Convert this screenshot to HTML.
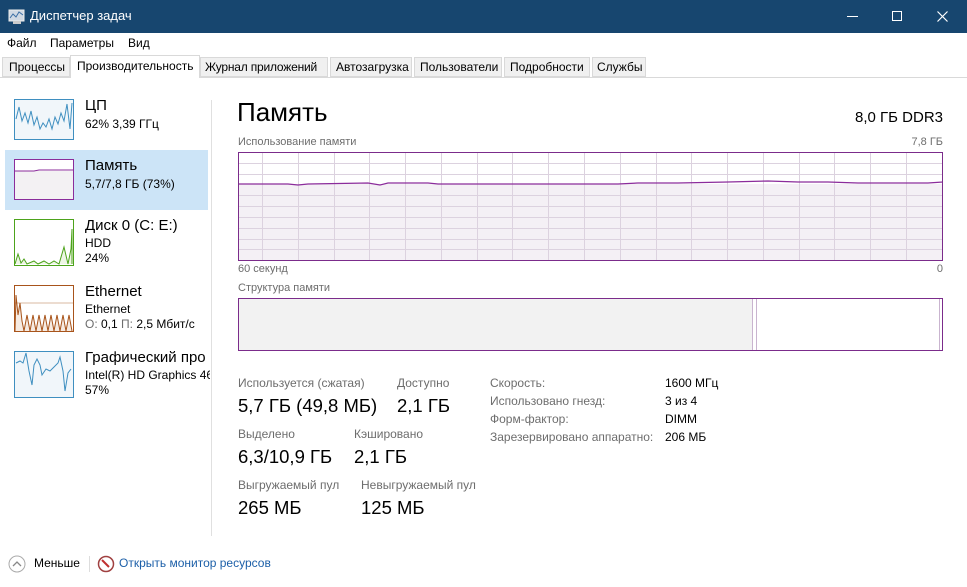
<!DOCTYPE html>
<html><head><meta charset="utf-8"><style>
*{margin:0;padding:0;box-sizing:border-box}
body{width:967px;height:587px;overflow:hidden;background:#fff;font-family:"Segoe UI","Liberation Sans","DejaVu Sans",sans-serif;color:#000;position:relative}
.a{position:absolute;white-space:nowrap}
.g{color:#6d6d6d}
.lab{font-size:12px;color:#6d6d6d}
.val{font-size:18.5px}
</style></head><body>
<div class="a" style="left:0;top:0;width:967px;height:33px;background:#17466f"></div>
<svg class="a" style="left:8px;top:9px" width="18" height="16"><rect x="1" y="1" width="15" height="11" fill="#cfd8e3" stroke="#eee"/><polyline points="2,9 5,5 8,8 11,3 15,6" stroke="#3a6ea5" fill="none"/><rect x="5" y="12" width="8" height="3" fill="#ccc"/></svg>
<div class="a" style="left:30px;top:8px;color:#fff;font-size:13px">Диспетчер задач</div>
<div class="a" style="left:847px;top:16px;width:11px;height:1px;background:#fff"></div>
<div class="a" style="left:892px;top:11px;width:10px;height:10px;border:1px solid #fff"></div>
<svg class="a" style="left:937px;top:11px" width="11" height="11"><path d="M0.5,0.5L10.5,10.5M10.5,0.5L0.5,10.5" stroke="#fff" stroke-width="1.2"/></svg>
<div class="a" style="left:7px;top:36px;font-size:12px">Файл</div>
<div class="a" style="left:50px;top:36px;font-size:12px">Параметры</div>
<div class="a" style="left:128px;top:36px;font-size:12px">Вид</div>
<div class="a" style="left:0;top:54px;width:967px;height:24px;background:#fff;border-bottom:1px solid #d9d9d9"></div>
<div class="a" style="left:2px;top:57px;width:68px;height:20px;background:#f0f0f0;border:1px solid #d9d9d9;font-size:12px;padding:2px 6px">Процессы</div>
<div class="a" style="left:70px;top:55px;width:130px;height:23px;background:#fff;border:1px solid #d9d9d9;border-bottom:none;font-size:12px;padding:3px 6px">Производительность</div>
<div class="a" style="left:200px;top:57px;width:128px;height:20px;background:#f0f0f0;border:1px solid #d9d9d9;font-size:12px;padding:2px 4px;letter-spacing:-0.2px">Журнал приложений</div>
<div class="a" style="left:330px;top:57px;width:82px;height:20px;background:#f0f0f0;border:1px solid #d9d9d9;font-size:12px;padding:2px 5px">Автозагрузка</div>
<div class="a" style="left:414px;top:57px;width:88px;height:20px;background:#f0f0f0;border:1px solid #d9d9d9;font-size:12px;padding:2px 5px">Пользователи</div>
<div class="a" style="left:504px;top:57px;width:86px;height:20px;background:#f0f0f0;border:1px solid #d9d9d9;font-size:12px;padding:2px 5px">Подробности</div>
<div class="a" style="left:592px;top:57px;width:54px;height:20px;background:#f0f0f0;border:1px solid #d9d9d9;font-size:12px;padding:2px 4px">Службы</div>

<div class="a" style="left:5px;top:150px;width:203px;height:60px;background:#cce4f7"></div>
<div class="a" style="left:211px;top:100px;width:1px;height:436px;background:#e0e0e0"></div>

<svg class="a" style="left:14px;top:99px" width="60" height="41"><rect x=".5" y=".5" width="59" height="40" fill="#f1f6fa" stroke="#3f8fc0"/><polyline points="2,20 5,8 8,22 11,14 14,24 17,12 20,26 23,18 26,30 29,24 32,28 35,20 38,30 41,18 44,25 47,14 50,22 53,5 56,30 58,4" fill="none" stroke="#3f8fc0"/></svg>
<div class="a" style="left:85px;top:97px;font-size:15px">ЦП</div>
<div class="a" style="left:85px;top:117px;font-size:12px">62% 3,39 ГГц</div>

<svg class="a" style="left:14px;top:159px" width="60" height="41"><rect x=".5" y=".5" width="59" height="40" fill="#f3f1f3" stroke="#8b2c9b"/><rect x="1" y="1" width="58" height="11" fill="#fff"/><polyline points="1,12 20,12 25,11 59,11" fill="none" stroke="#8b2c9b"/></svg>
<div class="a" style="left:85px;top:157px;font-size:15px">Память</div>
<div class="a" style="left:85px;top:177px;font-size:12px">5,7/7,8 ГБ (73%)</div>

<svg class="a" style="left:14px;top:219px" width="60" height="47"><rect x=".5" y=".5" width="59" height="46" fill="#fff" stroke="#4da31b"/><polyline points="1,45 4,35 7,44 10,40 13,45 20,42 24,45 30,42 35,45 40,42 45,45 50,28 54,45 57,30 58,10 58,45" fill="#eef6e6" stroke="#4da31b"/></svg>
<div class="a" style="left:85px;top:217px;font-size:15px">Диск 0 (C: E:)</div>
<div class="a" style="left:85px;top:236px;font-size:12px">HDD</div>
<div class="a" style="left:85px;top:251px;font-size:12px">24%</div>

<svg class="a" style="left:14px;top:285px" width="60" height="47"><rect x=".5" y=".5" width="59" height="46" fill="#fff" stroke="#a8541b"/><line x1="1" y1="18" x2="59" y2="18" stroke="#d8b8a0"/><polyline points="1,46 2,10 4,30 6,18 8,36 10,46 13,30 16,46 19,30 22,46 25,30 28,46 31,30 34,46 37,30 40,46 43,30 46,46 49,30 52,46 55,30 58,46" fill="#f6ebe2" stroke="#a8541b"/></svg>
<div class="a" style="left:85px;top:283px;font-size:15px">Ethernet</div>
<div class="a" style="left:85px;top:302px;font-size:12px">Ethernet</div>
<div class="a" style="left:85px;top:317px;font-size:12px"><span class="g">О:</span> 0,1 <span class="g">П:</span> 2,5 Мбит/с</div>

<svg class="a" style="left:14px;top:351px" width="60" height="47"><rect x=".5" y=".5" width="59" height="46" fill="#f1f6fa" stroke="#3f8fc0"/><polyline points="2,12 6,10 9,12 12,2 15,20 18,34 20,14 23,8 26,14 28,24 32,18 36,20 40,16 44,12 46,6 49,20 51,40 54,22 57,18" fill="none" stroke="#3f8fc0"/></svg>
<div class="a" style="left:85px;top:349px;font-size:15px;width:125px;overflow:hidden">Графический про</div>
<div class="a" style="left:85px;top:368px;font-size:12px;width:125px;overflow:hidden">Intel(R) HD Graphics 4600</div>
<div class="a" style="left:85px;top:383px;font-size:12px">57%</div>

<div class="a" style="left:237px;top:97px;font-size:26px">Память</div>
<div class="a" style="right:24px;top:109px;font-size:15px">8,0 ГБ DDR3</div>
<div class="a lab" style="left:238px;top:136px;font-size:11px">Использование памяти</div>
<div class="a lab" style="right:24px;top:136px;font-size:11px">7,8 ГБ</div>
<svg class="a" style="left:238px;top:152px" width="705" height="109">
<rect x="0" y="32" width="705" height="77" fill="#f4f0f5"/>
<g stroke="#dcd2df" stroke-width="1">
<line x1="0" y1="11.5" x2="705" y2="11.5"/><line x1="0" y1="22.5" x2="705" y2="22.5"/><line x1="0" y1="43.5" x2="705" y2="43.5"/><line x1="0" y1="54.5" x2="705" y2="54.5"/><line x1="0" y1="65.5" x2="705" y2="65.5"/><line x1="0" y1="76.5" x2="705" y2="76.5"/><line x1="0" y1="87.5" x2="705" y2="87.5"/><line x1="0" y1="97.5" x2="705" y2="97.5"/>
<line x1="24.5" y1="0" x2="24.5" y2="109"/><line x1="60.5" y1="0" x2="60.5" y2="109"/><line x1="96.5" y1="0" x2="96.5" y2="109"/><line x1="131.5" y1="0" x2="131.5" y2="109"/><line x1="167.5" y1="0" x2="167.5" y2="109"/><line x1="203.5" y1="0" x2="203.5" y2="109"/><line x1="239.5" y1="0" x2="239.5" y2="109"/><line x1="274.5" y1="0" x2="274.5" y2="109"/><line x1="310.5" y1="0" x2="310.5" y2="109"/><line x1="346.5" y1="0" x2="346.5" y2="109"/><line x1="382.5" y1="0" x2="382.5" y2="109"/><line x1="418.5" y1="0" x2="418.5" y2="109"/><line x1="453.5" y1="0" x2="453.5" y2="109"/><line x1="489.5" y1="0" x2="489.5" y2="109"/><line x1="525.5" y1="0" x2="525.5" y2="109"/><line x1="561.5" y1="0" x2="561.5" y2="109"/><line x1="596.5" y1="0" x2="596.5" y2="109"/><line x1="632.5" y1="0" x2="632.5" y2="109"/><line x1="668.5" y1="0" x2="668.5" y2="109"/>
</g>
<polyline points="0,32 50,32 60,33 70,32 130,31 142,33 150,31 190,31 200,32 380,32 400,31 440,31 490,30 530,29 560,30 590,30 620,31 690,31 705,30" fill="none" stroke="#8b2c9b" stroke-width="1.3"/>
<rect x=".5" y=".5" width="704" height="108" fill="none" stroke="#7b2c8b"/>
</svg>
<div class="a lab" style="left:238px;top:263px;font-size:11px">60 секунд</div>
<div class="a lab" style="right:24px;top:263px;font-size:11px">0</div>
<div class="a lab" style="left:238px;top:282px;font-size:11px">Структура памяти</div>
<div class="a" style="left:238px;top:298px;width:705px;height:53px;border:1px solid #7b2c8b;background:#fff"></div>
<div class="a" style="left:239px;top:299px;width:514px;height:51px;background:#f2f2f2;border-right:1px solid #c9b4cf"></div>
<div class="a" style="left:756px;top:299px;width:1px;height:51px;background:#c9b4cf"></div>
<div class="a" style="left:939px;top:299px;width:1px;height:51px;background:#c9b4cf"></div>

<div class="a lab" style="left:238px;top:376px">Используется (сжатая)</div>
<div class="a val" style="left:238px;top:395px">5,7 ГБ (49,8 МБ)</div>
<div class="a lab" style="left:397px;top:376px">Доступно</div>
<div class="a val" style="left:397px;top:395px">2,1 ГБ</div>
<div class="a lab" style="left:238px;top:427px">Выделено</div>
<div class="a val" style="left:238px;top:446px">6,3/10,9 ГБ</div>
<div class="a lab" style="left:354px;top:427px">Кэшировано</div>
<div class="a val" style="left:354px;top:446px">2,1 ГБ</div>
<div class="a lab" style="left:238px;top:478px">Выгружаемый пул</div>
<div class="a val" style="left:238px;top:497px">265 МБ</div>
<div class="a lab" style="left:361px;top:478px">Невыгружаемый пул</div>
<div class="a val" style="left:361px;top:497px">125 МБ</div>

<div class="a lab" style="left:490px;top:376px">Скорость:</div>
<div class="a lab" style="left:490px;top:394px">Использовано гнезд:</div>
<div class="a lab" style="left:490px;top:412px">Форм-фактор:</div>
<div class="a lab" style="left:490px;top:430px">Зарезервировано аппаратно:</div>
<div class="a" style="left:665px;top:376px;font-size:12px">1600 МГц</div>
<div class="a" style="left:665px;top:394px;font-size:12px">3 из 4</div>
<div class="a" style="left:665px;top:412px;font-size:12px">DIMM</div>
<div class="a" style="left:665px;top:430px;font-size:12px">206 МБ</div>

<svg class="a" style="left:8px;top:555px" width="18" height="18"><circle cx="9" cy="9" r="8" fill="#fff" stroke="#aaa"/><polyline points="5,11 9,7 13,11" fill="none" stroke="#888" stroke-width="1.3"/></svg>
<div class="a" style="left:34px;top:556px;font-size:12px">Меньше</div>
<div class="a" style="left:89px;top:556px;width:1px;height:16px;background:#ddd"></div>
<svg class="a" style="left:97px;top:555px" width="18" height="18"><circle cx="9" cy="9" r="7.5" fill="#fff" stroke="#a04040" stroke-width="1.5"/><line x1="5" y1="5" x2="12" y2="12" stroke="#c03030" stroke-width="2"/></svg>
<div class="a" style="left:119px;top:556px;font-size:12px;color:#1c5fa8">Открыть монитор ресурсов</div>
</body></html>
